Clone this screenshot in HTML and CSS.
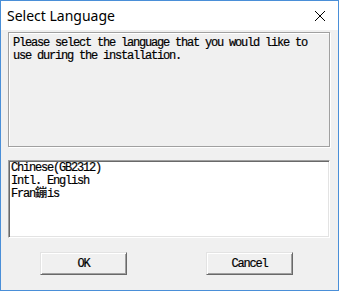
FILE: index.html
```html
<!DOCTYPE html>
<html lang="en">
<head>
    <meta charset="UTF-8">
    <meta name="viewport" content="width=device-width, initial-scale=1.0">
    <title>Select Language</title>
    <link rel="stylesheet" href="styles.css">
</head>
<body>
    <div class="window">
        <div class="titlebar">
            <span class="title">Select Language</span>
            <svg class="close" width="12" height="12" viewBox="0 0 12 12">
                <path d="M1 1 L11 11 M11 1 L1 11" stroke="#000" stroke-width="1" fill="none"/>
            </svg>
        </div>
        <div class="client">
            <div class="prompt">Please select the language that you would like to use during the installation.</div>
            <div class="listbox">
                <div class="item">Chinese(GB2312)</div>
                <div class="item">Intl. English</div>
                <div class="item">Fran<span class="wide">鏰</span>is</div>
            </div>
            <div class="buttons">
                <button class="btn">OK</button>
                <button class="btn">Cancel</button>
            </div>
        </div>
    </div>
</body>
</html>
```

FILE: styles.css
```css
body {
    margin: 0;
    background: #f0f0f0;
}
.window {
    width: 339px;
    height: 291px;
    box-sizing: border-box;
    border: 1px solid #4a8fd8;
    background: #f0f0f0;
    display: flex;
    flex-direction: column;
}
.titlebar {
    height: 29px;
    background: #fff;
    display: flex;
    align-items: center;
    justify-content: space-between;
    padding: 0 12px 0 6px;
}
.title {
    font-family: "Noto Sans", sans-serif;
    font-size: 14px;
    color: #000;
}
.close {
    display: block;
}
.client {
    padding: 2px 7px 0 7px;
    font-family: "Liberation Mono", "Noto Sans CJK SC", monospace;
    font-size: 12px;
    letter-spacing: -1.2px;
    line-height: 13px;
    color: #000;
    -webkit-text-stroke: 0.2px #000;
}
.prompt {
    height: 115px;
    box-sizing: border-box;
    width: 322px;
    border: 1px solid #a0a0a0;
    box-shadow: 1px 1px 0 #fff, inset 1px 1px 0 #fff;
    padding: 4px 4px;
}
.listbox {
    margin-top: 13px;
    height: 78px;
    width: 322px;
    box-sizing: border-box;
    background: #fff;
    border: 1px solid;
    border-color: #a0a0a0 #fff #fff #a0a0a0;
    box-shadow: inset 1px 1px 0 #696969, inset -1px -1px 0 #e3e3e3;
    padding: 1px 2px;
}
.item {
    height: 13px;
    white-space: nowrap;
}
.wide {
    letter-spacing: 0;
}
.buttons {
    display: flex;
    gap: 79px;
    margin-top: 14px;
    padding-left: 32px;
}
.btn {
    width: 87px;
    height: 23px;
    box-sizing: border-box;
    background: #f0f0f0;
    border: 1px solid;
    border-color: #e3e3e3 #696969 #696969 #e3e3e3;
    box-shadow: inset 1px 1px 0 #fff, inset -1px -1px 0 #a0a0a0;
    font-family: "Liberation Mono", monospace;
    font-size: 12px;
    letter-spacing: -1.2px;
    color: #000;
    -webkit-text-stroke: 0.2px #000;
    padding: 0;
}
```
